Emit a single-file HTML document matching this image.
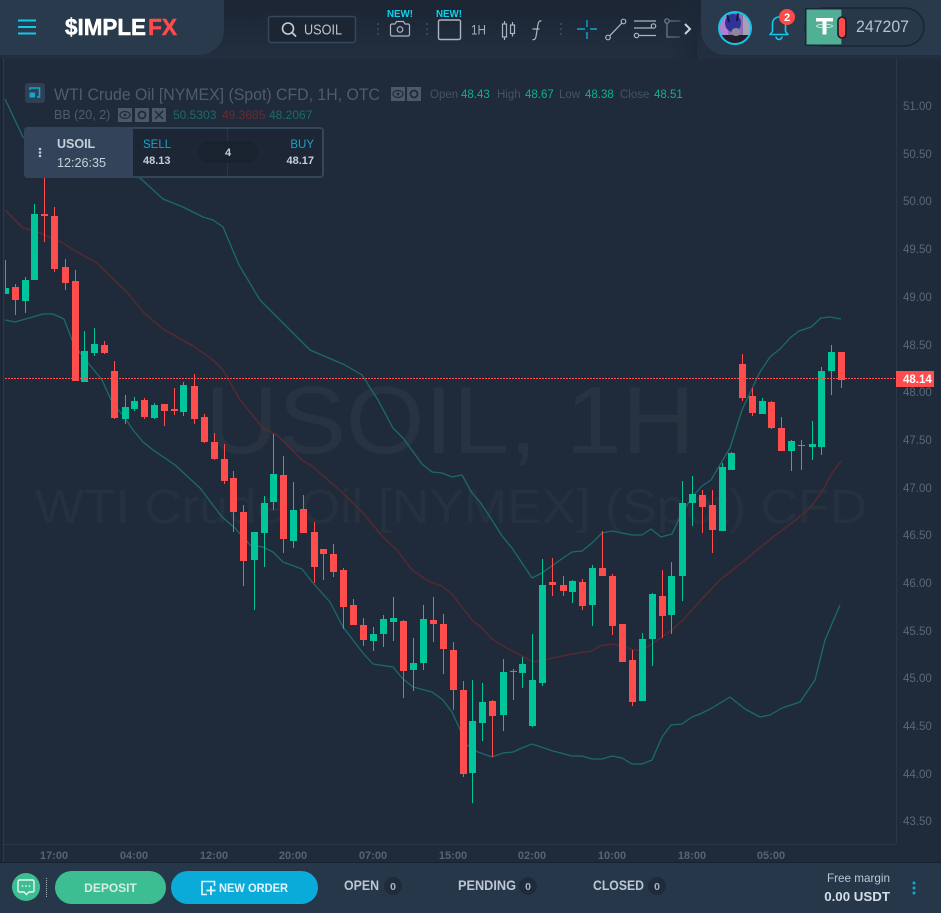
<!DOCTYPE html>
<html lang="en">
<head>
<meta charset="utf-8">
<title>SimpleFX USOIL</title>
<style>
html,body{margin:0;padding:0;background:#1f2b3b;width:941px;height:913px;overflow:hidden}
svg{display:block;font-family:"Liberation Sans",sans-serif}
</style>
</head>
<body>
<svg width="941" height="913" viewBox="0 0 941 913" xmlns="http://www.w3.org/2000/svg">
<defs>
<linearGradient id="top" x1="0" y1="0" x2="0" y2="1"><stop offset="0" stop-color="#1b2533"/><stop offset="1" stop-color="#222f40"/></linearGradient>
<linearGradient id="fade" x1="0" y1="0" x2="1" y2="0"><stop offset="0" stop-color="#1f2b3b" stop-opacity="0"/><stop offset="1" stop-color="#1c2736"/></linearGradient>
<clipPath id="avac"><circle cx="735" cy="28" r="15"/></clipPath>
</defs>

<!-- chart background -->
<rect width="941" height="913" fill="#1f2b3b"/>
<rect x="0" y="0" width="941" height="59" fill="url(#top)"/>
<rect x="3" y="58" width="1" height="805" fill="#2c3a4b"/>
<rect x="1" y="58" width="1" height="805" fill="#18212e"/>
<rect x="896" y="58" width="1" height="786" fill="#2a3747"/>
<rect x="4" y="844" width="892" height="1" fill="#2a3747"/>
<rect x="0" y="862" width="941" height="1" fill="#18212e"/>

<!-- watermark -->
<text x="450" y="453" text-anchor="middle" font-size="96" fill="#273341" textLength="490" lengthAdjust="spacingAndGlyphs">USOIL, 1H</text>
<text x="451" y="523" text-anchor="middle" font-size="48" fill="#25313f" textLength="832" lengthAdjust="spacingAndGlyphs">WTI Crude Oil [NYMEX] (Spot) CFD</text>

<!-- Bollinger bands -->
<g fill="none" stroke-width="1.300" stroke-linejoin="round">
<path stroke="#1b6a6a" d="M5 99L23 137L60 165L140 178L163 199L183 207L203 217L213 220L223 227L239 265L260 300L285 325L310 350L345 365L362 375L378 400L393 428L403 438L422 464L432 472L442 473L452 477L462 475L472 493L480 502L492 520L502 536L512 548L532 578L542 573L563 558L572 552L582 551L592 543L602 533L612 531L632 535L642 535L651 529L661 537L672 534L680 517L692 497L702 486L711 480L721 463L730 448L742 410L750 393L760 372L770 357L780 349L790 338L799 331L811 327L821 318L830 317L841 319"/>
<path stroke="#5e2830" d="M5 210L23 228L38 232L63 243L77 252L97 263L107 273L127 292L143 312L163 329L193 346L213 360L223 370L240 400L263 428L277 435L302 460L313 467L343 493L363 513L383 537L397 550L412 570L430 582L442 586L452 594L472 620L482 628L492 639L503 646L533 662L553 658L572 654L592 651L600 646L612 644L623 646L633 650L643 650L653 643L672 630L683 620L700 601L720 580L745 560L773 537L793 522L810 508L823 490L832 473L841 461"/>
<path stroke="#1b6a6a" d="M5 320L15 322L43 314L53 314L64 319L72 340L80 353L102 380L112 402L125 418L133 430L143 442L153 450L175 465L200 488L222 517L235 528L250 545L263 547L273 552L283 562L302 569L313 583L330 602L343 627L363 653L373 664L393 667L402 678L413 687L432 692L443 700L452 712L467 745L478 752L492 757L503 753L513 752L522 748L532 744L553 751L572 756L582 756L592 759L602 759L612 756L622 758L632 764L642 764L652 760L662 737L671 725L682 724L692 717L700 714L712 708L730 697L745 709L760 717L770 715L782 708L800 702L815 680L825 640L840 605"/>
</g>

<!-- candles: wicks -->
<path fill="none" stroke="#ff4d4d" stroke-width="1" d="M15.5 284V315M44.5 178V242M54.5 207V272M65.5 259V290M75.5 270V381M104.5 341V354M114.5 361V419M144.5 398V419M164.5 404V426M174.5 388V415M194.5 374V424M204.5 414V443M214.5 433V460M224.5 444V484M233.5 471V532M243.5 505V586M283.5 456V553M303.5 495V533M314.5 522V583M323.5 549V580M333.5 544V577M343.5 568V629M353.5 599V625M363.5 618V646M403.5 620V698M433.5 597V642M443.5 614V674M453.5 642V710M463.5 681V777M492.5 700V757M552.5 558V596M563.5 576V596M582.5 579V610M602.5 531V576M612.5 574V635M632.5 650V706M662.5 570V638M702.5 490V533M712.5 490V553M742.5 354V401M752.5 388V416M771.5 401V429M781.5 417V451M841.5 352V388"/>
<path fill="none" stroke="#00c49a" stroke-width="1" d="M5.5 260V294M25.5 277V313M34.5 204V280M84.5 331V382M94.5 328V356M125.5 395V424M134.5 397V411M154.5 403V419M183.5 382V416M254.5 532V610M264.5 496V567M273.5 434V510M293.5 482V548M373.5 627V651M383.5 615V647M393.5 597V641M413.5 638V691M423.5 605V670M472.5 680V803M482.5 683V741M503.5 659V731M513.5 669V700M522.5 657V688M532.5 634V727M542.5 559V686M572.5 580V603M592.5 565V626M642.5 633V701M652.5 593V666M671.5 562V634M682.5 481V601M692.5 476V526M722.5 463V531M731.5 452V470M762.5 398V414M791.5 440V471M801.5 440V470M812.5 421V460M821.5 367V455M831.5 345V395"/>
<!-- candles: bodies -->
<path fill="none" stroke="#ff4d4d" stroke-width="7" d="M15.5 287V300M44.5 214V216M54.5 216V269M65.5 267V283M75.5 281V381M104.5 345V353M114.5 371V418M144.5 400V417M164.5 404V411M174.5 409V411M194.5 386V419M204.5 417V442M214.5 442V459M224.5 459V481M233.5 478V512M243.5 512V561M283.5 475V539M303.5 509V533M314.5 532V567M323.5 549V554M333.5 554V572M343.5 570V607M353.5 605V625M363.5 625V640M403.5 621V671M433.5 620V624M443.5 624V649M453.5 650V690M463.5 690V774M492.5 701V716M552.5 582V585M563.5 585V591M582.5 582V606M602.5 568V576M612.5 576V626M622.5 624V662M632.5 660V702M662.5 596V616M702.5 495V507M712.5 505V530M742.5 364V398M752.5 396V413M771.5 402V428M781.5 428V451M841.5 352V380"/>
<path fill="none" stroke="#00c49a" stroke-width="7" d="M25.5 280V301M34.5 214V280M84.5 351V382M94.5 344V353M125.5 407V419M134.5 401V409M154.5 405V418M183.5 385V412M254.5 532V560M264.5 503V533M273.5 474V502M293.5 510V541M373.5 634V641M383.5 619V634M393.5 618V622M413.5 663V670M423.5 619V663M472.5 721V773M482.5 702V723M503.5 672V715M513.5 671V672M522.5 664V673M532.5 680V726M542.5 585V683M572.5 581V592M592.5 568V605M642.5 639V701M652.5 594V639M671.5 576V615M682.5 503V576M692.5 494V503M722.5 467V531M731.5 453V470M762.5 401V414M791.5 441V451M801.5 445V446M812.5 444V447M821.5 371V447M831.5 352V371"/>
<rect x="5" y="288" width="4" height="6" fill="#00c49a"/>

<!-- current price -->
<line x1="5" y1="378.5" x2="896" y2="378.5" stroke="#ff4d4d" stroke-width="1" stroke-dasharray="2 1"/>

<!-- price axis -->
<g font-size="11.5" fill="#5a6776">
<text x="903" y="110">51.00</text><text x="903" y="158">50.50</text><text x="903" y="205">50.00</text><text x="903" y="253">49.50</text><text x="903" y="301">49.00</text><text x="903" y="349">48.50</text><text x="903" y="396">48.00</text><text x="903" y="444">47.50</text><text x="903" y="492">47.00</text><text x="903" y="539">46.50</text><text x="903" y="587">46.00</text><text x="903" y="635">45.50</text><text x="903" y="682">45.00</text><text x="903" y="730">44.50</text><text x="903" y="778">44.00</text><text x="903" y="825">43.50</text>
</g>
<rect x="896" y="371" width="38" height="16" fill="#ff4d4d"/>
<text x="903" y="383" font-size="11.5" font-weight="700" fill="#fff">48.14</text>

<!-- time axis -->
<g font-size="11" font-weight="700" fill="#566373" text-anchor="middle">
<text x="54" y="859">17:00</text><text x="134" y="859">04:00</text><text x="214" y="859">12:00</text><text x="293" y="859">20:00</text><text x="373" y="859">07:00</text><text x="453" y="859">15:00</text><text x="532" y="859">02:00</text><text x="612" y="859">10:00</text><text x="692" y="859">18:00</text><text x="771" y="859">05:00</text>
</g>

<!-- legend -->
<rect x="25" y="83" width="20" height="20" rx="3" fill="#2f4053"/>
<path d="M30 90v-2h9.500v9h-2.500" fill="none" stroke="#0fa6d2" stroke-width="1.600"/>
<rect x="29.500" y="92.500" width="5.500" height="5" fill="#0fa6d2"/>
<text x="54" y="100" font-size="16.500" fill="#4e5c6c" textLength="326" lengthAdjust="spacingAndGlyphs">WTI Crude Oil [NYMEX] (Spot) CFD, 1H, OTC</text>
<g>
<rect x="391" y="87" width="14" height="14" fill="#4a5868"/><ellipse cx="398" cy="94" rx="5" ry="3.500" fill="none" stroke="#1f2b3b" stroke-width="1.200"/><circle cx="398" cy="94" r="1.400" fill="#1f2b3b"/>
<rect x="407" y="87" width="14" height="14" fill="#4a5868"/><circle cx="414" cy="94" r="3.500" fill="none" stroke="#1f2b3b" stroke-width="1.800"/>
</g>
<g font-size="11.500">
<text x="430" y="98" fill="#465362">Open</text><text x="461" y="98" fill="#0fb08e">48.43</text>
<text x="497" y="98" fill="#465362">High</text><text x="525" y="98" fill="#0fb08e">48.67</text>
<text x="559" y="98" fill="#465362">Low</text><text x="585" y="98" fill="#0fb08e">48.38</text>
<text x="620" y="98" fill="#465362">Close</text><text x="654" y="98" fill="#0fb08e">48.51</text>
</g>
<text x="54" y="119" font-size="12.500" fill="#4e5c6c">BB (20, 2)</text>
<g>
<rect x="118" y="108" width="14" height="14" fill="#4a5868"/><ellipse cx="125" cy="115" rx="5" ry="3.500" fill="none" stroke="#1f2b3b" stroke-width="1.200"/><circle cx="125" cy="115" r="1.400" fill="#1f2b3b"/>
<rect x="135" y="108" width="14" height="14" fill="#4a5868"/><circle cx="142" cy="115" r="3.500" fill="none" stroke="#1f2b3b" stroke-width="1.800"/>
<rect x="152" y="108" width="14" height="14" fill="#4a5868"/><path d="M155 111l8 8M163 111l-8 8" stroke="#1f2b3b" stroke-width="1.500"/>
</g>
<g font-size="12">
<text x="173" y="119" fill="#1b6a6a">50.5303</text><text x="222" y="119" fill="#6a2a30">49.3685</text><text x="269" y="119" fill="#1b6a6a">48.2067</text>
</g>

<!-- trade panel -->
<rect x="25" y="128" width="298" height="49" rx="3" fill="#1c2634" stroke="#34465a" stroke-width="2"/>
<path d="M28 127H133V178H28a4 4 0 0 1-4-4V131a4 4 0 0 1 4-4z" fill="#33445a"/>
<rect x="227" y="129" width="1" height="47" fill="#2a3544"/>
<circle cx="40" cy="149" r="1.300" fill="#c2ccd6"/><circle cx="40" cy="152.500" r="1.300" fill="#c2ccd6"/><circle cx="40" cy="156" r="1.300" fill="#c2ccd6"/>
<text x="57" y="148" font-size="12.500" font-weight="700" fill="#c6d0da">USOIL</text>
<text x="57" y="167" font-size="13" fill="#c6d0da" textLength="49" lengthAdjust="spacingAndGlyphs">12:26:35</text>
<text x="143" y="148" font-size="11.500" fill="#17a3cd">SELL</text>
<text x="143" y="164" font-size="11" font-weight="700" fill="#c6d0da">48.13</text>
<rect x="198" y="141" width="60" height="22" rx="11" fill="#19222f"/>
<text x="228" y="156" font-size="11" font-weight="700" text-anchor="middle" fill="#c6d0da">4</text>
<text x="314" y="148" font-size="11.500" text-anchor="end" fill="#17a3cd">BUY</text>
<text x="314" y="164" font-size="11" font-weight="700" text-anchor="end" fill="#c6d0da">48.17</text>

<!-- top left panel -->
<path d="M0 0H224V30a25 25 0 0 1-25 25H0z" fill="#293a4d"/>
<path d="M18 20.500h18M18 27h18M18 33.500h18" stroke="#12c8ea" stroke-width="2"/>
<text x="65" y="35" font-size="23" font-weight="700" fill="#fff" stroke="#fff" stroke-width=".5" textLength="81" lengthAdjust="spacingAndGlyphs">$IMPLE</text>
<text x="148" y="35" font-size="23" font-weight="700" fill="#ff4a4a" stroke="#ff4a4a" stroke-width=".5" textLength="29" lengthAdjust="spacingAndGlyphs">FX</text>

<!-- search -->
<rect x="268.500" y="16.500" width="87" height="26" rx="2.500" fill="#1b2533" stroke="#37475a" stroke-width="1.500"/>
<circle cx="288" cy="28.500" r="5.500" fill="none" stroke="#c4ced8" stroke-width="1.600"/>
<path d="M292 32.500l4 4" stroke="#c4ced8" stroke-width="1.800"/>
<text x="304" y="34.500" font-size="14.500" fill="#b9c4cf" textLength="38" lengthAdjust="spacingAndGlyphs">USOIL</text>

<!-- toolbar -->
<g fill="#4c5a6a">
<circle cx="378" cy="24" r=".9"/><circle cx="378" cy="29" r=".9"/><circle cx="378" cy="34" r=".9"/>
<circle cx="427" cy="24" r=".9"/><circle cx="427" cy="29" r=".9"/><circle cx="427" cy="34" r=".9"/>
<circle cx="561" cy="24" r=".9"/><circle cx="561" cy="29" r=".9"/><circle cx="561" cy="34" r=".9"/>
</g>
<text x="387" y="17" font-size="10.500" font-weight="700" fill="#0fd0ee" textLength="26" lengthAdjust="spacingAndGlyphs">NEW!</text>
<text x="436" y="17" font-size="10.500" font-weight="700" fill="#0fd0ee" textLength="26" lengthAdjust="spacingAndGlyphs">NEW!</text>
<path d="M392 24h3l1.500-2.500h7l1.500 2.500h3a1.500 1.500 0 0 1 1.500 1.500v9a1.500 1.500 0 0 1-1.500 1.500h-16a1.500 1.500 0 0 1-1.500-1.500v-9a1.500 1.500 0 0 1 1.500-1.500z" fill="none" stroke="#aab6c2" stroke-width="1.200"/>
<circle cx="400" cy="29.500" r="2.800" fill="none" stroke="#aab6c2" stroke-width="1.200"/>
<rect x="438.500" y="20" width="22" height="19.500" rx="1.500" fill="none" stroke="#a9b5c1" stroke-width="1.400"/>
<text x="471" y="34.500" font-size="14" fill="#a3afbb" textLength="15" lengthAdjust="spacingAndGlyphs">1H</text>
<g fill="none" stroke="#aab6c2" stroke-width="1.200">
<rect x="502.500" y="24" width="4" height="13"/><path d="M504.500 21v3M504.500 37v3"/>
<rect x="510.500" y="25" width="4" height="8.500"/><path d="M512.500 22v3M512.500 33.500v3"/>
<path d="M541.500 21c-2.500-.5-3 1-3.500 3.500l-2 12c-.4 2.500-1.500 3.500-3.500 3M532.500 29h7"/>
</g>
<path d="M577 29h8M590 29h7M587 20v7M587 32v7" stroke="#12a7cf" stroke-width="1.400" fill="none"/>
<g fill="none" stroke="#aab6c2" stroke-width="1.200">
<circle cx="608" cy="37.500" r="2.300"/><circle cx="623.500" cy="21.500" r="2.300"/><path d="M609.700 35.800L621.800 23.200"/>
<path d="M634 21h22M634 35.500h22M634 28h18"/>
<circle cx="653.500" cy="26" r="2.200" fill="#1f2b3b"/><circle cx="636.500" cy="35.500" r="2.200" fill="#1f2b3b"/>
<path d="M667 23v14h13M669.500 21h11" stroke="#768392"/><circle cx="667" cy="21" r="2.200" stroke="#768392"/>
</g>
<rect x="665" y="0" width="32" height="59" fill="url(#fade)"/>
<path d="M685 24l5 5-5 5" fill="none" stroke="#c7d2dc" stroke-width="2"/>

<!-- top right panel -->
<path d="M701 0H941V55H726a25 25 0 0 1-25-25z" fill="#293a4d"/>
<circle cx="735" cy="28" r="17" fill="#12c8ea"/>
<circle cx="735" cy="28" r="15" fill="#8a6fb0"/>
<g clip-path="url(#avac)">
<rect x="720" y="13" width="8" height="30" fill="#b07fd0"/>
<rect x="743" y="13" width="8" height="22" fill="#a9a0b8"/>
<ellipse cx="733" cy="23" rx="8" ry="9" fill="#2f339a"/>
<rect x="720" y="35" width="30" height="10" fill="#20202c"/>
<ellipse cx="736" cy="32" rx="4.500" ry="4" fill="#8d889c"/>
<path d="M727 14l2 8M738 13l-1 8" stroke="#14163a" stroke-width="2"/>
</g>
<path d="M772.500 31.500v-8a6.500 6.500 0 0 1 13 0v8l2.500 3h-18zM776 36.500a3 3 0 0 0 6 0" fill="none" stroke="#12c8ea" stroke-width="1.600" stroke-linejoin="round"/>
<circle cx="787" cy="17" r="8" fill="#ff4a4a"/>
<text x="787" y="21" font-size="11" font-weight="700" fill="#fff" text-anchor="middle">2</text>
<rect x="805" y="8" width="119" height="38" rx="19" fill="#28384b" stroke="#1b2533" stroke-width="1.500"/>
<path d="M805 8h37v38h-37z" fill="#1b2533"/>
<rect x="806.500" y="9.500" width="35" height="35" fill="#50af95"/>
<path d="M816 18h17v3.500h-6.500v13h-4V21.500H816z" fill="#fff"/>
<ellipse cx="824.500" cy="26" rx="8" ry="1.800" fill="none" stroke="#dff3ec" stroke-width=".8"/>
<rect x="838" y="17" width="8" height="21" rx="4" fill="#ff4a4a" stroke="#141c27" stroke-width="1.600"/>
<text x="856" y="32" font-size="16.500" fill="#b9c3ce" textLength="53" lengthAdjust="spacingAndGlyphs">247207</text>

<!-- bottom bar -->
<rect x="0" y="863" width="941" height="50" fill="#27374a"/>
<circle cx="26" cy="887" r="14" fill="#3cbd92"/>
<path d="M19.500 880h13a1.500 1.500 0 0 1 1.500 1.500v9a1.500 1.500 0 0 1-1.500 1.500h-3.500l-2.500 2.500-2.500-2.500h-4.500a1.500 1.500 0 0 1-1.500-1.500v-9a1.500 1.500 0 0 1 1.500-1.500z" fill="none" stroke="#e6f6f0" stroke-width="1.400"/>
<circle cx="22.500" cy="886" r=".9" fill="#e6f6f0"/><circle cx="26" cy="886" r=".9" fill="#e6f6f0"/><circle cx="29.500" cy="886" r=".9" fill="#e6f6f0"/>
<line x1="46.500" y1="878" x2="46.500" y2="897" stroke="#a9b5c1" stroke-width="1" stroke-dasharray="1 1"/>
<rect x="55" y="871" width="111" height="33" rx="16.500" fill="#3cbd92"/>
<text x="110.500" y="892" font-size="12" font-weight="700" fill="#d6eee4" text-anchor="middle">DEPOSIT</text>
<rect x="171" y="871" width="147" height="33" rx="16.500" fill="#0aabd9"/>
<path d="M214.500 886v-4.500h-12.500v13h5" fill="none" stroke="#e2f4fb" stroke-width="1.600"/>
<path d="M211 886v9M206.500 890.500h9" stroke="#e2f4fb" stroke-width="1.800"/>
<text x="219" y="892" font-size="12" font-weight="700" fill="#e2f4fb" textLength="69" lengthAdjust="spacingAndGlyphs">NEW ORDER</text>
<g font-size="13.500" font-weight="700" fill="#bcc7d2">
<text x="344" y="890" textLength="35" lengthAdjust="spacingAndGlyphs">OPEN</text>
<text x="458" y="890" textLength="58" lengthAdjust="spacingAndGlyphs">PENDING</text>
<text x="593" y="890" textLength="51" lengthAdjust="spacingAndGlyphs">CLOSED</text>
</g>
<g fill="#1f2b3b"><circle cx="393" cy="886" r="9"/><circle cx="528" cy="886" r="9"/><circle cx="657" cy="886" r="9"/></g>
<g font-size="10.500" font-weight="700" fill="#a9b5c1" text-anchor="middle">
<text x="393" y="890">0</text><text x="528" y="890">0</text><text x="657" y="890">0</text>
</g>
<text x="890" y="882" font-size="11.700" fill="#bcc7d2" text-anchor="end">Free margin</text>
<text x="890" y="901" font-size="13.300" font-weight="700" fill="#d6dee6" text-anchor="end">0.00 USDT</text>
<circle cx="914" cy="883" r="1.500" fill="#0fa6d2"/><circle cx="914" cy="888" r="1.500" fill="#0fa6d2"/><circle cx="914" cy="893" r="1.500" fill="#0fa6d2"/>
</svg>
</body>
</html>
